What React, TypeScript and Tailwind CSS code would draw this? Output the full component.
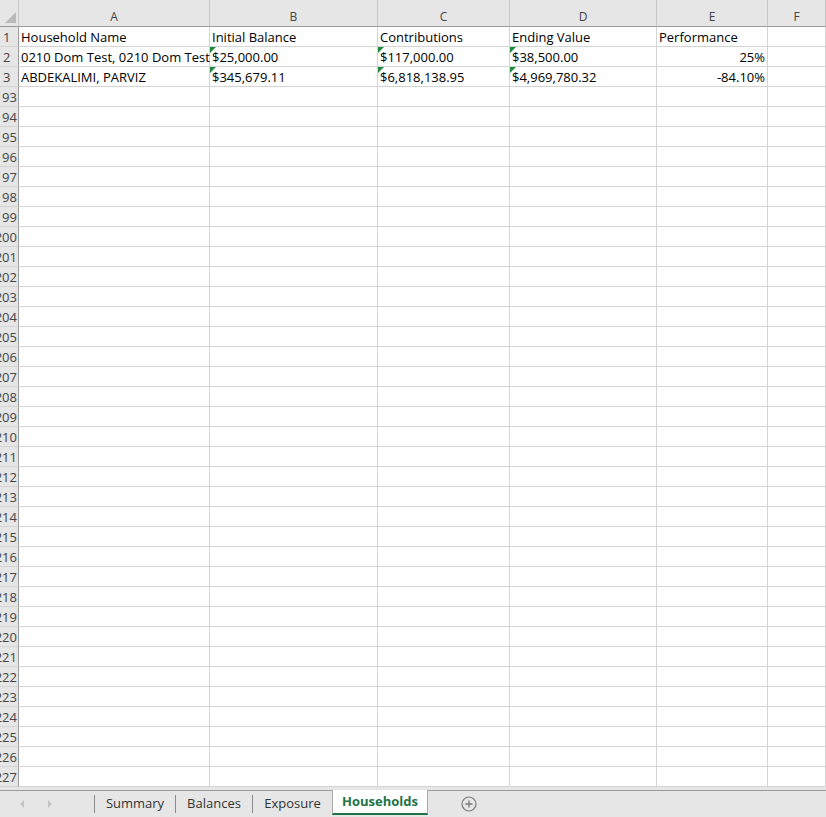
const cols = ["A", "B", "C", "D", "E", "F"];

type Row = { n: string; cells: string[]; flags?: boolean[] };

const dataRows: Row[] = [
  { n: "1", cells: ["Household Name", "Initial Balance", "Contributions", "Ending Value", "Performance", ""] },
  {
    n: "2",
    cells: ["0210 Dom Test, 0210 Dom Test", "$25,000.00", "$117,000.00", "$38,500.00", "25%", ""],
    flags: [false, true, true, true, false, false],
  },
  {
    n: "3",
    cells: ["ABDEKALIMI, PARVIZ", "$345,679.11", "$6,818,138.95", "$4,969,780.32", "-84.10%", ""],
    flags: [false, true, true, true, false, false],
  },
];

const emptyRows: string[] = [];
for (let i = 193; i <= 227; i++) emptyRows.push(String(i));

const grid = "grid grid-cols-[19px_191px_168px_132px_147px_111px_1fr]";

function Cell({ text, flag, right }: { text: string; flag?: boolean; right?: boolean }) {
  return (
    <div
      className={`relative h-5 border-r border-b border-[#d4d4d4] px-[2px] pt-px leading-[19px] whitespace-nowrap overflow-visible ${
        right ? "text-right" : ""
      }`}
    >
      {flag && (
        <span className="absolute left-0 top-0 w-0 h-0 border-t-[6px] border-t-[#1e8a3e] border-r-[6px] border-r-transparent" />
      )}
      {text}
    </div>
  );
}

export default function App() {
  return (
    <div
      className="w-[826px] h-[817px] bg-white text-[13px] text-black flex flex-col overflow-hidden"
      style={{ fontFamily: "'Open Sans', 'Noto Sans', sans-serif" }}
    >
      <div className="h-[790px] shrink-0 overflow-hidden bg-[#e6e6e6]">
        {/* column headers */}
        <div className={`${grid} h-[27px] bg-[#e6e6e6] text-[#444]`}>
          <div className="relative border-r border-b border-[#9b9b9b] border-r-[#c6c6c6]">
            <span className="absolute right-[2px] bottom-[3px] w-0 h-0 border-b-[11px] border-b-[#b9b9b9] border-l-[11px] border-l-transparent" />
          </div>
          {cols.map((c) => (
            <div
              key={c}
              className="border-r border-r-[#c6c6c6] border-b border-b-[#9b9b9b] flex items-end justify-center pb-[2px] text-[12px] leading-none h-full"
            >
              <span className="mb-px">{c}</span>
            </div>
          ))}
        </div>

        <div className="bg-white">
          {dataRows.map((r) => (
            <div key={r.n} className={grid}>
              <div className="h-5 bg-[#e6e6e6] border-r border-r-[#9b9b9b] border-b border-b-[#d4d4d4] text-[#444] pl-[3px] pt-px leading-[19px]">
                {r.n}
              </div>
              {r.cells.map((t, i) => (
                <Cell key={i} text={t} flag={r.flags?.[i]} right={r.n !== "1" && i === 4} />
              ))}
            </div>
          ))}

          {emptyRows.map((n) => (
            <div key={n} className={grid}>
              <div className="h-5 bg-[#e6e6e6] border-r border-r-[#9b9b9b] border-b border-b-[#d4d4d4] text-[#444] pt-px leading-[19px] overflow-hidden flex justify-end pr-[1px]">
                <span className="whitespace-nowrap">{n}</span>
              </div>
              {cols.map((c) => (
                <Cell key={c} text="" />
              ))}
            </div>
          ))}
        </div>
      </div>

      {/* sheet tabs */}
      <div className="h-[27px] shrink-0 bg-[#e6e6e6] border-t border-[#9b9b9b] flex items-stretch text-[13px] text-[#333]">
        <div className="w-[94px] flex items-center pl-[19px] gap-[22px]">
          <svg width="6" height="8" viewBox="0 0 6 8">
            <path d="M5 0 L1 4 L5 8 Z" fill="#c4c4c4" />
          </svg>
          <svg width="6" height="8" viewBox="0 0 6 8">
            <path d="M1 0 L5 4 L1 8 Z" fill="#c4c4c4" />
          </svg>
        </div>
        <div className="flex items-center">
          <div className="h-[18px] w-px bg-[#8c8c8c]" />
          <div className="w-[80px] text-center">Summary</div>
          <div className="h-[18px] w-px bg-[#8c8c8c]" />
          <div className="w-[76px] text-center">Balances</div>
          <div className="h-[18px] w-px bg-[#8c8c8c]" />
        </div>
        <div className="w-[79px] flex items-center justify-center">Exposure</div>
        <div className="w-[96px] -mt-px bg-white border-x border-[#ababab] border-b-2 border-b-[#217346] flex items-center justify-center font-bold text-[#217346] mb-[2px]">
          Households
        </div>
        <div className="flex items-center pl-[33px]">
          <svg width="16" height="16" viewBox="0 0 16 16">
            <circle cx="8" cy="8" r="7" fill="none" stroke="#7a7a7a" strokeWidth="1.2" />
            <path d="M8 4.5 V11.5 M4.5 8 H11.5" stroke="#7a7a7a" strokeWidth="1.3" />
          </svg>
        </div>
      </div>
    </div>
  );
}
